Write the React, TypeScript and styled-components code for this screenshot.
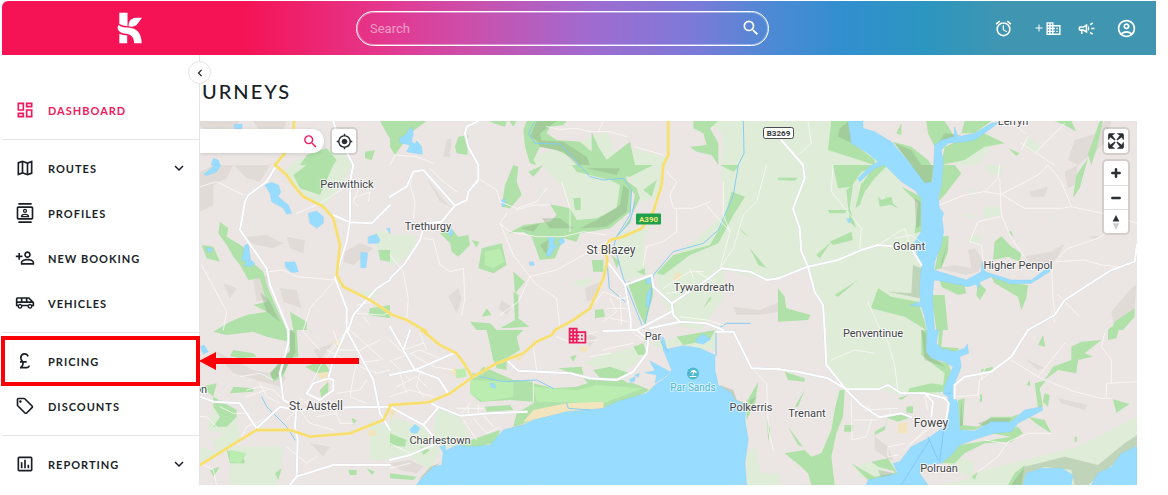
import React from "react";
import styled, { createGlobalStyle } from "styled-components";
import {
  MdAdd,
  MdBusiness,
  MdChevronLeft,
  MdCurrencyPound,
  MdExpandMore,
  MdMyLocation,
  MdOutlineAccountCircle,
  MdOutlineAirportShuttle,
  MdOutlineAlarm,
  MdOutlineAssessment,
  MdOutlineCampaign,
  MdOutlineContacts,
  MdOutlineDashboard,
  MdOutlineLocalOffer,
  MdOutlineMap,
  MdOutlinePersonAddAlt,
  MdSearch,
} from "react-icons/md";

const GlobalStyle = createGlobalStyle`
  *, *::before, *::after { box-sizing: border-box; }
  body { margin: 0; background: #fff; color: #1a1f27; font-family: Lato, sans-serif; }
  button, input { font: inherit; color: inherit; }
`;

const Page = styled.div`
  height: 100vh;
  display: flex;
  flex-direction: column;
  padding: 1px 12px 10px 2px;
  overflow: hidden;
`;

const Header = styled.header`
  flex: none;
  display: grid;
  grid-template-columns: 354px minmax(160px, 413px) 1fr;
  align-items: center;
  height: 54px;
  border-top-left-radius: 6px;
  color: #fff;
  background: linear-gradient(
    90deg,
    #f51356 0%,
    #f51356 21%,
    #e23a92 34%,
    #c653b0 42%,
    #a06bd0 51%,
    #7b7ad8 60%,
    #4b8ad4 67%,
    #318fce 73%,
    #2c96c0 80%,
    #4096b1 87%,
    #4096b1 100%
  );
`;

const LogoLink = styled.a`
  display: flex;
  padding-left: 115px;
  color: #fff;
`;

const SearchBar = styled.form`
  display: flex;
  align-items: center;
  height: 35px;
  padding: 0 7px 0 13px;
  border: 1px solid #fff;
  border-radius: 18px;
  box-shadow: inset 0 0 0 1px rgba(255, 255, 255, 0.4);
`;

const SearchInput = styled.input`
  flex: 1;
  min-width: 0;
  padding: 0;
  border: 0;
  outline: 0;
  background: transparent;
  font-family: Roboto, sans-serif;
  font-size: 13px;
  &::placeholder {
    color: rgba(255, 255, 255, 0.5);
    opacity: 1;
  }
`;

const PlainButton = styled.button`
  display: inline-flex;
  align-items: center;
  justify-content: center;
  padding: 0;
  border: 0;
  background: transparent;
  cursor: pointer;
`;

const Actions = styled.div`
  display: flex;
  align-items: center;
  justify-content: flex-end;
  gap: 16px;
  padding-right: 19px;
`;

const ActionGroup = styled.div`
  display: flex;
  align-items: center;
  gap: 15px;
  margin: 0 4px;
`;

const Body = styled.div`
  flex: 1;
  min-height: 0;
  display: flex;
`;

const Sidebar = styled.aside`
  position: relative;
  z-index: 2;
  flex: none;
  width: 198px;
  padding-top: 27px;
  border-right: 1px solid #e4e4e6;
  background: #fff;
`;

const Collapse = styled(PlainButton)`
  position: absolute;
  top: 6px;
  right: -12px;
  width: 23px;
  height: 23px;
  border: 1px solid #e4e4e6;
  border-radius: 50%;
  background: #fff;
`;

const NavGroup = styled.ul`
  list-style: none;
  margin: 0;
  padding: 6px 0;
  & + & {
    border-top: 1px solid #e6e6e8;
  }
`;

const NavItem = styled.li`
  position: relative;
`;

const NavLink = styled.a<{ $active?: boolean }>`
  display: flex;
  align-items: center;
  gap: 13px;
  height: 45px;
  padding: 0 11px 1px 13px;
  color: ${(p) => (p.$active ? "#f0195c" : "#1a1f27")};
  font-size: 11px;
  font-weight: 700;
  letter-spacing: 1px;
  text-decoration: none;
`;

const NavLabel = styled.span`
  flex: 1;
`;

const Callout = styled.div`
  position: absolute;
  inset: -3px -1px -2px -1px;
  border: 4px solid #fb0007;
  pointer-events: none;
`;

const CalloutArrow = styled.svg`
  position: absolute;
  left: 100%;
  top: 13px;
  pointer-events: none;
`;

const Main = styled.main`
  flex: 1;
  min-width: 0;
  display: flex;
  flex-direction: column;
  padding-right: 19px;
`;

const Title = styled.h1`
  flex: none;
  display: flex;
  align-items: center;
  height: 66px;
  margin: 0;
  padding: 6px 0 0 2px;
  font-size: 20px;
  font-weight: 500;
  letter-spacing: 2px;
`;

const MapPanel = styled.section`
  position: relative;
  flex: 1;
  min-height: 0;
  overflow: hidden;
  background: #ebe6e3;
`;

const MapSvg = styled.svg`
  display: block;
  width: 100%;
  height: 100%;
`;

const MapTools = styled.div`
  position: absolute;
  top: 8px;
  left: 0;
  display: flex;
  gap: 8px;
`;

const MapSearch = styled.form`
  display: flex;
  align-items: center;
  width: 124px;
  height: 24px;
  padding-right: 5px;
  border-radius: 0 12px 12px 0;
  background: #fff;
  color: #f0195c;
  box-shadow: 0 1px 4px rgba(0, 0, 0, 0.12);
`;

const MapControls = styled.div`
  position: absolute;
  top: 8px;
  right: 9px;
  display: flex;
  flex-direction: column;
  gap: 8px;
`;

const ControlGroup = styled.div`
  display: flex;
  flex-direction: column;
  border-radius: 3px;
  background: #fff;
  box-shadow: 0 0 0 2px rgba(0, 0, 0, 0.1);
`;

const ControlButton = styled(PlainButton)`
  width: 24px;
  height: 24px;
  color: #2b2f33;
  & + & {
    border-top: 1px solid #ddd;
  }
`;

/* Map geometry: every shape belongs to a sheet of the survey grid. */
type Shape = [sheet: keyof typeof sheets, d: string];

const sheets = {
  A1: [0, 0],
  B1: [1170, 0],
  C1: [2334, 0],
  A2: [0, 495],
  B2: [1170, 495],
  C2: [2334, 495],
  A3: [0, 990],
  B3: [1170, 990],
  C3: [2334, 990],
};

const shade: Shape[] = [
  ["A1", "M600,363L720,363 700,390 640,395 600,380Z M760,363L860,363 850,390 780,395Z"],
  ["A2", "M600,20L640,0 700,0 680,40 640,60 640,120 600,140Z M740,215L800,210 850,235 820,250 750,235Z M860,215L915,225 910,265 870,250Z M760,345L800,330 810,400 770,410Z M840,370L890,375 905,430 850,410Z M670,355L710,370 690,400Z M1035,260L1080,235 1120,250 1060,300 1030,290Z M700,0L810,0 780,50 740,40Z M1080,50L1120,45 1110,70Z"],
  ["B1", "M170,420L185,415 180,470 160,470Z"],
  ["B2", "M110,40L165,110 190,130 150,110Z M175,395L205,370 215,400 200,445Z M335,405L365,425 350,450 325,430Z M585,370L630,350 620,400 590,410Z M1030,425L1110,435 1170,410 1170,440 1100,450 1040,450Z"],
  ["C1", "M890,420L960,400 980,363 1000,363 980,430 900,495 870,480Z"],
  ["C2", "M860,20L900,0 890,60 870,70Z M755,80L810,65 800,95 760,95Z M570,255L590,250 620,290 600,320 565,330 480,310 530,300 580,310Z M735,275L820,260 860,235 840,275 820,300 750,300Z M1000,440L1060,370 1075,360 1070,430 1010,495Z M930,215L965,212 950,222Z"],
  ["A3", "M640,60L760,120 860,140 840,170 700,130Z M940,60L1000,40 960,90Z M930,340L990,350 970,380Z"],
  ["B3", "M0,400L60,390 100,410 80,430 30,420Z M560,0L620,20 600,50Z"],
  ["C3", "M290,320L330,350 350,395 320,380 290,360Z M840,205L930,225 920,240 850,220Z M740,85L800,115 780,120Z"],
];

const pale: Shape[] = [
  ["C2", "M-219,-132L-164,-95 -170,0 -165,150 -260,235 -370,320 -340,420 -300,480 -230,495 -165,400 -160,315 -40,345 0,340 90,305 110,380 135,420 140,600 205,672 310,672 360,690 490,690 520,620 450,560 430,480 430,150 400,100 330,0 240,-100 215,-132Z"],
  ["C1", "M520,470L620,410 640,440 600,495 540,495Z M750,410L790,440 770,460 740,440Z"],
  ["C2", "M618,125L665,125 670,150 618,160Z M575,210L612,212 605,235 572,230Z M620,0L670,0 670,30 630,25Z M567,70L590,75 585,90Z M555,150L580,150 590,165Z M830,150L837,150 837,160 828,160Z"],
  ["C3", "M480,465L560,450 620,420 740,390 900,350 1077,260 1077,465Z M540,380L590,400 580,440 500,410Z M250,400L330,400 310,440 240,440Z"],
  ["B2", "M455,0L520,70 540,130 540,195 620,170 700,150 720,60 650,-100 540,-60Z M690,205L780,180 760,240 770,330 700,345 680,240Z M730,-50L830,-20 800,100 750,110 720,40Z M0,210L75,210 75,260 0,305Z M560,345L610,340 590,365 550,360Z M450,65L462,90 445,80Z"],
  ["B1", "M430,470L540,430 620,495 430,495Z"],
  ["A1", "M930,470L1010,440 1070,495 900,495Z"],
  ["A2", "M900,-20L1060,-10 1020,70 970,125 910,95 850,20Z M1130,200L1170,200 1170,300 1130,250Z M1080,380L1140,380 1110,405Z"],
  ["A3", "M690,350L850,350 830,465 690,465Z M640,230L710,260 720,320 620,300Z M600,350L660,370 600,400Z M1110,270L1170,290 1170,390 1110,390Z M640,330L700,300 720,325 650,370Z"],
  ["B3", "M580,100L620,80 740,50 760,80 700,130 640,120Z M0,260L100,290 150,360 120,420 60,380 0,380Z M140,235L210,260 240,320 160,360 130,310Z M780,40L975,0 975,60 860,45 820,60Z M1070,370L1100,350 1110,430 1170,430 1170,465 1070,465Z"],
];

const green: Shape[] = [
  ["A1", "M1140,363L1180,363 1180,430 1160,400Z M1095,455L1125,450 1115,480 1095,475Z M920,465L980,445 1010,480 1000,495 900,495Z"],
  ["B1", "M0,363L110,363 60,400 40,430 15,465 0,440Z M195,440L205,410 235,405 232,465 200,460Z M300,363L350,363 345,380 310,370Z M358,363L380,363 370,380Z M410,363L530,363 520,375 480,380 470,400 500,420 570,425 605,455 605,395 625,440 650,480 700,440 720,425 735,495 570,495 540,470 500,450 450,440 430,480 440,495 420,490 405,440 400,390Z M910,363L985,363 960,385 985,430 985,495 965,465 920,455 900,440 950,435 940,400 910,385Z"],
  ["C1", "M160,363L210,363 225,430 290,480 290,495 150,450Z M445,363L500,363 530,410 470,440 450,400Z M560,363L640,363 590,400 550,400Z M500,440L610,395 680,430 620,440 560,480 490,495Z M345,425L400,440 450,480 460,495 400,495Z M355,400L370,370 370,405Z M690,445L725,460 715,468Z M830,363L880,363 895,395 860,375Z M930,463L965,363 975,363 955,450 940,495Z M200,445L290,475 220,470Z"],
  ["A2", "M655,205L660,170 685,190 680,215 730,245 755,290 790,320 800,360 830,430 860,495 865,530 800,515 760,500 680,510 640,500 690,470 740,450 800,440 760,420 800,410 780,340 745,345 720,300 700,275 680,240Z M605,240L640,245 660,290 620,280Z M880,30L920,0 1000,0 960,90 900,70Z M870,440L920,470 920,495 880,495Z M1110,430L1170,420 1170,460 1105,450Z M1135,255L1170,255 1170,290 1140,285Z"],
  ["B2", "M370,0L385,5 380,50 395,90 360,130 335,125 345,60Z M415,20L460,0 430,35Z M150,205L180,185 205,215 235,210 240,240 205,275 185,260 180,235Z M245,225L268,230 260,248Z M275,250L335,235 350,300 310,325 265,310Z M355,205L400,180 480,170 500,150 480,118 540,130 560,165 620,160 680,130 690,60 660,45 560,20 545,0 690,0 725,75 720,140 660,190 570,205 560,230 520,220 495,280 450,285 425,215 400,200Z M550,100L572,98 572,135 555,135Z M370,320L405,350 375,385Z M370,380L385,390 385,460 418,485 330,490 375,465Z M275,455L290,430 305,450Z M240,470L300,475 320,495 260,495Z M605,285L640,285 640,320 610,320Z M615,435L640,432 645,455 615,460Z M665,270L690,290 680,310Z M712,350L785,335 790,390 775,440 765,480 745,440Z M700,40L740,70 750,100 720,160 690,205 720,175 735,90Z M800,325L850,270 960,240 1000,170 1025,80 1065,95 1030,150 985,235 900,270 820,330Z M760,75L800,45 785,95Z M990,0L1030,20 1045,5 1040,0Z M1045,185L1075,215 1060,205Z M940,430L960,395 965,400Z M1080,250L1130,310 1105,300Z M740,320L765,310 765,330Z M600,0L790,0 720,35 640,30Z"],
  ["C2", "M165,0L320,0 250,20 220,65 180,70Z M395,0L470,0 460,60 440,55Z M495,0L530,0 550,25 500,90 480,110 490,50Z M205,75L225,60 215,130 235,190 215,170Z M370,65L430,95 430,200 410,205 420,115Z M290,0L330,0 290,40 250,60Z M232,130L250,55 290,40 260,80 245,120Z M155,230L220,200 225,225 165,240Z M115,270L160,230 125,280Z M490,215L512,212 510,260 490,310 470,315Z M0,38L60,38 50,47 0,45Z M895,30L930,-20 905,70 885,98Z M650,230L670,213 700,245 730,265 725,290 690,275 645,285Z M485,345L560,362 565,385 540,390 490,365Z M600,350L625,375 605,405 595,390Z M640,335L700,355 750,360 745,400 730,435 720,395 650,355Z M690,200L700,198 705,215Z M280,425L300,370 340,395 420,410 440,470 445,495 380,455 280,430Z M170,390L240,345 180,395Z M460,390L500,390 510,495 475,495Z M0,370L20,395 25,430 98,450 90,465 0,470Z M1010,470L1070,430 1070,455 1035,495 1000,495Z M150,135L210,135 200,145 155,145Z M300,95L310,105 340,95 345,118 305,125Z M320,90L360,130 340,120Z"],
  ["A3", "M700,60L760,70 770,80 720,85 690,78Z M860,0L890,0 895,80 870,85 850,140 820,155 810,130 850,90 870,60Z M915,110L970,90 990,125 950,130Z M960,180L985,155 985,195 965,210Z M700,170L760,175 760,185 690,190Z M640,200L710,240 710,260 680,290 640,290 660,260 640,230Z M605,170L650,160 640,200Z M680,360L730,380 735,400 690,400Z M630,420L660,410 640,440Z M825,430L845,415 835,450Z M1045,420L1070,420 1070,435 1050,435Z M1055,265L1070,270 1060,285Z M1100,415L1125,425 1115,435Z"],
  ["B3", "M290,0L400,0 380,20 390,60 350,85 350,120 320,115 310,90Z M250,145L280,110 370,150 430,155 430,215 360,210 270,215 240,190Z M240,130L290,130 320,170 260,180Z M285,230L360,225 370,240 290,245Z M430,160L490,175 560,170 620,150 730,160 780,180 740,200 640,235 430,225Z M380,250L430,220 520,230 430,270 390,285 370,290Z M610,120L660,110 720,130 700,145 630,145Z M505,115L575,110 580,135 545,130Z M580,145L700,150 720,165 600,165Z M860,20L975,0 960,30 880,45Z M1070,215L1105,155 1095,220 1070,270Z M1130,265L1140,300 1135,335Z M0,310L50,330 45,350 0,345Z M0,430L80,440 70,450 0,445Z M90,350L120,360 100,375Z M200,345L330,300 320,335 270,350 230,355Z M730,50L760,40 770,75 745,75Z M540,80L560,75 550,95Z M205,125L225,120 210,145Z"],
  ["C3", "M430,0L447,0 447,65 470,90 510,100 520,125 495,185 430,190 390,185 395,175 460,160 495,165 500,130 430,75Z M482,0L495,0 490,50 545,55 530,68 480,62Z M20,125L80,145 80,155 30,150Z M185,180L200,180 195,260 175,310 160,380 170,465 100,465 90,430 70,410 20,370 80,360 100,380 130,370 160,300 170,240Z M200,285L225,285 222,305 198,305Z M50,230L80,180 60,230Z M30,290L75,350 60,345Z M360,205L390,195 370,210Z M385,230L405,228 405,250 385,248Z M320,260L380,250 390,265 360,275Z M290,305L325,285 330,260 320,300 290,315Z M220,400L290,440 350,430 345,415 360,430 340,450 270,450Z M280,395L330,385 355,425 300,410Z M540,210L560,205 555,285 600,290 640,260 700,260 780,235 770,160 805,150 785,175 795,230 720,255 700,285 620,285 590,300 545,300Z M800,150L825,110 880,90 880,50 910,35 970,30 920,70 945,80 900,90 895,130 840,120Z M780,45L795,15 802,50Z M745,165L755,150 757,168Z M1005,208L1055,222 1015,248Z M605,195L612,193 612,215 605,215Z M610,118L645,110 645,123 610,125Z M490,400L545,345 700,320 640,310 720,290 735,310 700,335 620,340 560,370 530,400Z M750,260L800,270 820,310 780,285Z M580,440L600,425 590,450Z M690,465L710,430 740,405 730,465Z M890,320L897,320 897,335 890,335Z M990,0L1000,-10 1025,-10 1015,25 990,30Z M800,190L815,195 810,230 795,215Z"],
];

const dark: Shape[] = [
  ["B1", "M440,420L520,425 590,470 600,495 560,495 520,455 450,440Z M440,363L500,363 450,400 455,430 420,410Z"],
  ["B2", "M620,165L690,120 700,60 718,75 710,140 650,185 570,190Z M390,190L450,175 430,200Z M450,240L475,225 470,270Z M590,10L690,10 680,30Z M455,160L510,160 550,190 480,190Z"],
  ["C1", "M185,385L215,363 225,430 180,410Z M500,400L550,405 480,430Z M350,430L400,450 430,495 400,495Z"],
  ["C2", "M400,0L465,0 460,60 430,50Z M410,100L428,110 428,180 415,190Z M405,300L430,310 425,400 330,380 400,385Z M490,290L510,230 490,310Z"],
  ["C3", "M430,0L445,10 445,60 500,110 440,90Z M550,210L555,285 545,290Z M600,280L640,265 700,265 690,280 620,290Z M700,465L740,410 860,380 960,405 1040,340 1077,315 1077,345 1020,390 960,440 930,465 890,465 880,420 800,410 745,430 735,465Z M300,420L350,430 310,445Z"],
  ["B3", "M320,330L340,300 410,280 390,290 350,300 310,350 290,350Z M120,410L150,400 100,440 85,450Z M1080,210L1100,200 1080,230Z M990,165L1030,180 1040,210 1070,220 1060,230 1020,200Z"],
  ["A3", "M810,130L860,70 890,60 850,130 820,150Z M870,0L885,10 885,60 870,70Z"],
  ["A2", "M780,380L810,410 840,470 800,440Z"],
];

const lime: Shape[] = [
  ["B3", "M240,150L370,155 370,200 280,215 240,190Z M430,170L560,180 620,165 760,175 640,220 440,215Z M190,120L225,115 230,140 200,145Z"],
  ["B2", "M285,260L330,250 345,290 310,310 285,300Z"],
  ["A3", "M690,360L740,370 720,400 690,395Z"],
];

const sand: Shape[] = [
  ["B3", "M400,275L430,240 530,220 640,215 640,235 530,247 430,272Z M770,185L790,165 790,182Z M0,240L30,230 0,270Z M570,50L595,50 590,65 570,65Z M370,85L395,80 395,95Z M180,125L195,110 200,140Z"],
  ["C3", "M360,280L388,275 388,310 360,310Z"],
  ["A3", "M955,130L985,125 985,155 960,155Z M1105,300L1128,300 1128,318 1105,318Z M1000,35L1030,30 1020,60Z"],
  ["B2", "M855,325L875,325 870,345 850,345Z"],
];

const water: Shape[] = [
  ["C2", "M210,-132L255,-132 255,-110 290,-100 340,-70 400,0 440,55 463,50 467,0 470,-60 490,-75 528,-85 530,-115 540,-85 590,-95 640,-125 662,-128 640,-110 590,-75 560,-70 510,-65 490,-45 495,-15 495,0 490,60 480,100 485,130 497,145 492,160 497,200 490,240 470,290 468,315 500,325 565,345 610,320 612,290 622,320 700,345 760,345 820,300 815,320 760,355 700,357 640,335 607,350 600,372 595,358 570,365 490,348 468,345 463,400 470,495 482,495 475,535 490,550 530,560 560,550 568,537 572,565 545,575 550,605 530,655 525,685 540,715 545,795 590,798 640,770 700,770 740,735 790,725 795,735 720,775 700,800 650,805 600,820 545,840 520,870 490,895 430,900 425,925 450,960 265,960 270,945 360,925 345,895 365,890 400,845 450,820 500,785 515,735 510,695 495,685 500,665 525,605 500,590 460,580 445,560 447,495 440,455 430,425 395,420 427,410 425,380 430,300 415,260 410,230 430,200 430,100 410,75 370,50 320,0 290,10 245,50 240,40 275,5 300,-10 270,-35 220,-65 215,-100Z"],
  ["B3", "M80,465L90,450 130,410 155,405 160,365 200,345 240,350 300,345 340,300 400,285 430,270 530,245 640,235 680,215 770,190 795,165 830,140 845,120 820,60 880,47 930,55 975,75 975,120 985,165 1025,190 1035,210 1070,225 1065,270 1075,330 1065,400 1070,465Z"],
  ["B3", "M820,60L815,20 822,25 832,62Z M780,93L840,125 825,140 795,160 800,135 765,128 795,122Z M720,148L735,140 735,152 722,158Z M735,135L748,130 745,142Z M60,298L75,283 90,295 80,310 65,308Z M300,160L312,160 318,175 305,172Z M920,25L940,12 962,28 940,42 920,38Z M150,350L165,345 168,370 158,365Z"],
  ["C3", "M735,465L745,430 790,415 850,415 885,435 880,465Z M940,465L960,430 1000,410 1030,370 1077,348 1077,465Z"],
  ["A1", "M703,373L727,373 725,388 705,388Z M633,495L640,475 655,480 660,495Z"],
  ["A2", "M612,28L645,0 663,0 650,20 620,32Z M795,60L815,52 835,60 842,80 835,95 865,120 875,145 860,148 850,130 815,110 810,85Z M925,145L950,138 970,155 970,175 950,190 930,175Z M735,240L745,238 752,285 765,295 755,305 733,302 740,290 725,285Z M622,247L635,250 632,262 622,260Z M855,292L885,290 895,320 875,323 858,308Z M1105,215L1130,207 1140,225 1135,235 1105,235Z M1083,262L1103,265 1098,308 1082,308Z M1160,190L1170,190 1170,205Z"],
  ["B1", "M45,405L65,380 70,400 65,425 75,432 80,422 95,440 97,463 75,460 50,455 60,435 28,428 30,415Z"],
  ["B2", "M335,105L345,103 345,120 337,125Z M172,200L182,190 190,200 183,215Z M475,215L495,220 490,240 505,240 490,255 480,275 468,270 478,245Z M505,225L518,218 525,230 512,240Z M418,292L430,290 433,300 420,302Z M770,340L782,340 782,355 770,358Z M772,385L782,370 780,420 768,425Z"],
  ["C2", "M207,160L218,163 217,173 210,172Z"],
  ["A3", "M600,50L612,45 625,65 610,72Z"],
];

const streams: Shape[] = [
  ["B1", "M435,363L415,400 435,430 510,432 560,485 568,500"],
  ["B2", "M568,0L600,35 640,45 700,40 725,75 720,150 680,215 M735,110L720,170 680,215 672,240 700,340 760,490 M652,300L658,370 705,410 M1045,0L1030,90 985,195 940,235 850,260 790,330 782,400 765,480 M985,490L1010,475 1080,475"],
  ["B1", "M1060,363L1062,460 1045,495"],
  ["A3", "M785,200L800,230 860,290 885,330"],
  ["B3", "M270,140L340,155 440,150 490,175 M978,10L978,75 M808,10L815,40 835,65 M530,220L535,235 600,240"],
  ["C3", "M500,190L520,190"],
];

const ferry: Shape[] = [["C3", "M455,330L370,465 M450,320L480,390 M497,300L485,395"]];

const lanes: Shape[] = [
  ["A2", "M600,65L650,50 730,90 M605,300L680,440 670,495 M805,320L850,315 890,335 1005,345 M1005,345L930,430 910,495 M890,145L960,115 1045,60 M1060,100L1110,80 1105,110 M1080,60L1060,110 1075,125 M1070,420L1130,410 M1060,445L1150,450 1170,440 M1090,455L1110,480"],
  ["B1", "M470,380L510,388 560,385 600,395 660,395 710,410 M640,363L625,395 M735,440L820,465 M15,465L80,470 130,490 M0,495L15,465"],
  ["B2", "M265,40L320,75 330,110 380,130 440,110 470,70 M350,145L330,175 360,200 440,215 520,215 580,200 650,210 M380,135L430,120 480,120 M515,50L540,130 540,200 M330,175L370,270 420,335 385,410 330,450 M420,335L500,315 580,270 650,230 M100,220L130,225 150,300 180,320 220,310 225,400 215,450 M0,270L40,320 55,400 50,460 M70,20L60,60 75,110 70,160 M120,10L160,50 200,80 M830,20L860,50 840,90 850,130 910,130 960,110 M945,115L1020,200 990,310 M860,130L860,200 820,230 770,245 760,300 M600,430L640,380 690,400 M1000,50L1000,150 1020,200 M420,335L440,360 500,400 510,490 M990,310L1030,250 1060,150 1100,110 1130,0"],
  ["B2", "M660,400L680,440 640,470 M680,400L710,400 M650,430L710,430 M660,460L715,470 M690,390L695,480 M820,370L850,350 900,320 940,320 M830,385L870,380 M900,310L910,340 M920,320L970,350 M870,455L950,465 1000,480"],
  ["C1", "M90,363L100,430 60,465 M750,410L730,450 M730,430L830,495 M740,400L720,380 M770,460L860,370"],
  ["C2", "M165,0L160,80 200,130 250,190 245,255 M485,120L560,90 620,80 660,40 665,0 M620,80L670,88 780,30 810,0 850,50 880,125 1020,155 1077,175 M670,88L740,130 850,130 880,125 M665,40L670,150 700,220 750,290 M665,155L600,170 575,230 610,240 615,290 M820,300L870,250 960,220 990,200 M820,300L825,400 830,450 M835,290L920,285 970,300 1020,305 M830,470L820,440 M840,390L900,450 M300,240L380,190 400,250 M270,410L300,480 330,530 350,600 360,680 M440,240L400,210 350,220"],
  ["C3", "M700,90L780,140 800,150 890,185 970,205 1000,205 M985,200L985,160 1077,155 M860,40L780,140 M600,190L605,205 M610,150L620,115 M540,200L600,195 605,150 690,90 M1000,160L1000,90 970,50 980,10 M660,380L690,335 750,310 820,310 M600,425L660,380 M220,205L222,330 265,320 280,270 M230,270L300,270 M260,240L360,235 M270,225L280,245 M620,330L680,340 M160,90L230,60 290,70 M380,360L400,340 460,290 M400,340L440,300 470,270 M380,340L330,350 330,380 360,375 M440,200L450,240 M330,260L340,240"],
  ["A3", "M660,230L700,250 750,250 M780,160L800,200 840,220 M740,180L780,170 820,180 850,210 M900,240L930,280 1000,300 M930,170L960,110 1040,0 M1000,0L1020,60 1080,60 1140,30 M980,60L1060,100 1140,90 M1080,110L1130,130 1170,120 M1060,140L1050,200 1100,220 M1010,190L1080,180 1100,150 M1000,220L1020,280 1060,280 M950,260L1010,250 M1080,60L1060,140 M650,290L620,260 600,260 M720,330L740,290 790,270 M890,240L860,270 M820,150L780,130 720,140 M905,0L960,60 M1050,0L1150,90 M600,400L640,420 650,465 M860,350L920,400 950,380 M740,200L800,180 M900,205L930,225"],
  ["B3", "M0,30L60,90 M10,90L90,60 160,90 M60,70L130,110 190,120 M90,10L110,60 M40,60L100,40 M0,90L60,150 M20,170L80,140 110,170 M0,200L60,180 130,200 M90,125L80,170 100,200 M30,130L50,190 M200,235L280,235 M215,250L240,220 M235,230L235,255 M265,225L265,255 M250,265L290,310 330,290 M280,255L310,290 M220,270L260,330 M430,155L430,215 M500,20L550,40 620,30 M570,20L620,5 M720,0L760,30 M1085,115L1130,160 1135,300 1150,360 M0,340L60,370 M0,415L60,400 M430,50L440,120 M640,60L680,50 730,40 M600,80L660,70"],
];

const whiteRoads: Shape[] = [
  ["A2", "M830,0L800,50 745,90 735,110 720,195 800,310 810,360 865,495 M1000,150L1050,172 1115,175 1170,120 M1060,0L1050,50 1050,170 1040,230 1005,340 1040,430 1040,500 M1045,495L1060,450 1130,370 1170,345"],
  ["A1", "M1000,363L1010,400 1060,495"],
  ["A3", "M865,0L865,40 840,130 850,210 890,230 885,290 893,330 890,440 870,465 M600,200L640,215 720,220 770,295 840,230 890,240 1050,232 1170,230 M890,440L1000,405 1170,405 M1040,0L1000,90 985,145 940,160 920,190 960,210 1000,180 1000,150 985,145 M1040,0L1120,150 1140,250 1170,300"],
  ["B1", "M265,363L230,380 225,400 235,440 265,495"],
  ["B2", "M0,95L50,65 70,20 100,15 195,122 155,170 105,175 90,225 45,295 0,340 M195,122L230,105 235,80 265,45 265,0 M652,290L705,360 722,460 722,495 M705,360L785,330 790,365 845,415 850,450 870,470 780,490 M740,495L845,440 M845,415L950,345 995,310 1080,320 1130,345 1170,340 M870,470L950,475 1000,495"],
  ["C1", "M10,420L75,495"],
  ["C2", "M75,0L80,40 45,130 65,190 70,260 90,305 110,380 135,420 140,495 M0,340L90,305 180,285 250,255 300,240 400,250 430,300 M750,495L830,450 860,405 1000,315 1070,290 1077,240"],
  ["C3", "M140,0L145,105 205,180 250,225 305,262 370,250 400,262 M0,118L60,125 150,145 205,178 300,178 330,165 370,190 440,190 500,205 M440,190L465,215 460,260 M530,205L530,165 560,140 640,125 700,80 750,0 M500,205L512,220 505,265 490,290"],
  ["B3", "M355,95L385,122 540,130 600,145 680,150 730,125 770,70 775,30 740,0 M640,3L740,0 M980,5L1030,5 1085,115 1170,118 M0,-10L40,60 75,120 0,135 M40,60L60,0 M75,120L190,70 M75,120L145,145 175,190 M125,220L145,232 100,285 130,320 M150,232L210,257 300,250 410,245 M0,230L100,285 M0,390L60,375 140,340"],
];

const yellowRoads: Shape[] = [
  ["A1", "M882,363L880,395 870,440 825,495"],
  ["A2", "M825,0L860,30 880,60 910,95 970,125 1000,160 1020,240 1010,330 1030,365 1110,405 1170,445"],
  ["B2", "M0,447L50,465 110,500"],
  ["B3", "M95,0L150,45 200,70 225,105 247,142"],
  ["B1", "M835,363L835,465 820,495"],
  ["B2", "M820,0L815,60 790,140 755,190 700,215 660,225 645,250 652,290 640,340 600,430 550,465 495,495"],
  ["B3", "M495,0L485,15 440,35 400,70 320,100 247,142 180,190 115,217 0,225"],
  ["A3", "M1170,230L1150,270 1100,290 1050,310 930,320 870,300 770,300 720,330 640,380 600,405"],
];

const MapLayer = ({ shapes, ...paint }: { shapes: Shape[] } & React.SVGProps<SVGGElement>) => (
  <g fill="none" strokeLinejoin="round" strokeLinecap="round" {...paint}>
    {shapes.map(([sheet, d], i) => (
      <path key={i} d={d} transform={`translate(${sheets[sheet].join(" ")})`} />
    ))}
  </g>
);

const towns: { name: string; x: number; y: number; size?: number }[] = [
  { name: "Penwithick", x: 347, y: 188 },
  { name: "Trethurgy", x: 428, y: 230 },
  { name: "St Blazey", x: 611, y: 254, size: 12 },
  { name: "Tywardreath", x: 704, y: 291 },
  { name: "Golant", x: 909, y: 250 },
  { name: "Higher Penpol", x: 1018, y: 269 },
  { name: "Penventinue", x: 873, y: 337 },
  { name: "Par", x: 653, y: 340 },
  { name: "St. Austell", x: 316, y: 410, size: 12 },
  { name: "Charlestown", x: 440, y: 444 },
  { name: "Polkerris", x: 751, y: 411 },
  { name: "Trenant", x: 807, y: 417 },
  { name: "Fowey", x: 931, y: 427, size: 12 },
  { name: "Polruan", x: 939, y: 472 },
  { name: "Lerryn", x: 1013, y: 125 },
  { name: "on", x: 201, y: 393 },
];

const TownLabel = styled.text<{ $size: number }>`
  font-family: Roboto, sans-serif;
  font-size: ${(p) => p.$size}px;
  fill: #444448;
  stroke: rgba(255, 255, 255, 0.75);
  stroke-width: 2px;
  stroke-linejoin: round;
  paint-order: stroke;
  text-anchor: middle;
`;

const BeachLabel = styled(TownLabel)`
  fill: #4cb6cc;
  stroke: rgba(255, 255, 255, 0.6);
`;

const ShieldText = styled.text<{ $color: string }>`
  font-family: Roboto, sans-serif;
  font-size: 8px;
  font-weight: 700;
  fill: ${(p) => p.$color};
  text-anchor: middle;
`;

const JourneyMap = () => (
  <MapSvg viewBox="200 121 937 364" preserveAspectRatio="xMinYMin slice" role="img" aria-label="Map">
    <g transform="scale(0.333333)">
      <MapLayer shapes={shade} fill="#e0dbd7" />
      <MapLayer shapes={pale} fill="#deecd8" />
      <MapLayer shapes={green} fill="#afe1a8" />
      <MapLayer shapes={dark} fill="#8fae85" fillOpacity={0.38} />
      <MapLayer shapes={lime} fill="#bbecb0" />
      <MapLayer shapes={sand} fill="#f2e5bd" />
      <MapLayer shapes={water} fill="#98dcff" stroke="#8acdf3" strokeWidth={1} />
      <MapLayer shapes={streams} stroke="#86cdf2" strokeWidth={3} />
      <MapLayer shapes={ferry} stroke="#7dbcf0" strokeWidth={2} />
      <MapLayer shapes={lanes} stroke="#fbf9f7" strokeWidth={3} strokeOpacity={0.8} />
      <MapLayer shapes={whiteRoads} stroke="#d8dce6" strokeWidth={8} />
      <MapLayer shapes={whiteRoads} stroke="#fff" strokeWidth={6} />
      <MapLayer shapes={yellowRoads} stroke="#f2e6b0" strokeWidth={9} />
      <MapLayer shapes={yellowRoads} stroke="#f8df6b" strokeWidth={7} />
    </g>
    {towns.map((t) => (
      <TownLabel key={t.name} x={t.x} y={t.y} $size={t.size ?? 11}>
        {t.name}
      </TownLabel>
    ))}
    <circle cx="693" cy="373.500" r="6" fill="#4fb9cc" />
    <path d="M690 372.500q1.500-3 4-2.500t3 3l-3-.800-.800 3h-.900l.700-3.200z M689.800 376h6.500v1h-6.500z" fill="#fff" />
    <BeachLabel x="693" y="391" $size={10}>
      Par Sands
    </BeachLabel>
    <rect x="763.500" y="127.500" width="30" height="11" rx="2" fill="#fff" stroke="#4a4a50" />
    <ShieldText x="778.500" y="136" $color="#333">
      B3269
    </ShieldText>
    <rect x="636" y="213.500" width="25" height="11" rx="1" fill="#1fa04b" />
    <ShieldText x="648.500" y="222" $color="#f4e67a">
      A390
    </ShieldText>
    <MdBusiness x="567" y="325" size={21} color="#f0195c" />
  </MapSvg>
);

const Logo = () => (
  <svg width="25" height="32" viewBox="351 37 76 95" fill="currentColor" aria-hidden="true">
    <path d="M358 38H383V79Q369 78 358 72Z" />
    <path d="M386 79C386 61 395 53 412 53H427L410 76Q399 83 386 79Z" />
    <path d="M356 75Q366 83 384 83C413 84 426 103 426 131H403C403 111 392 104 378 102C358 100 347 87 356 75Z" />
    <path d="M358 102Q369 107 382 107V131H358Z" />
  </svg>
);

type Item = { label: string; icon: React.ReactNode; active?: boolean; expandable?: boolean; marked?: boolean };

const groups: Item[][] = [
  [{ label: "DASHBOARD", icon: <MdOutlineDashboard size={20} />, active: true }],
  [
    { label: "ROUTES", icon: <MdOutlineMap size={20} />, expandable: true },
    { label: "PROFILES", icon: <MdOutlineContacts size={20} /> },
    { label: "NEW BOOKING", icon: <MdOutlinePersonAddAlt size={20} style={{ transform: "scaleX(-1)" }} /> },
    { label: "VEHICLES", icon: <MdOutlineAirportShuttle size={20} /> },
  ],
  [
    { label: "PRICING", icon: <MdCurrencyPound size={20} />, marked: true },
    { label: "DISCOUNTS", icon: <MdOutlineLocalOffer size={20} /> },
  ],
  [{ label: "REPORTING", icon: <MdOutlineAssessment size={20} />, expandable: true }],
];

const IconSlot = styled.span`
  display: flex;
  justify-content: center;
  width: 20px;
`;

export default function App() {
  return (
    <Page>
      <GlobalStyle />
      <Header>
        <LogoLink href="#" aria-label="Home">
          <Logo />
        </LogoLink>
        <SearchBar role="search">
          <SearchInput type="text" placeholder="Search" aria-label="Search" />
          <PlainButton type="button" aria-label="Submit search">
            <MdSearch size={20} />
          </PlainButton>
        </SearchBar>
        <Actions>
          <PlainButton type="button" aria-label="Reminders">
            <MdOutlineAlarm size={19} />
          </PlainButton>
          <ActionGroup>
            <PlainButton type="button" aria-label="Add company">
              <MdAdd size={12} />
              <MdBusiness size={17} />
            </PlainButton>
            <PlainButton type="button" aria-label="Announcements">
              <MdOutlineCampaign size={19} />
            </PlainButton>
          </ActionGroup>
          <PlainButton type="button" aria-label="Account">
            <MdOutlineAccountCircle size={21} />
          </PlainButton>
        </Actions>
      </Header>
      <Body>
        <Sidebar>
          <nav>
            {groups.map((items, i) => (
              <NavGroup key={i}>
                {items.map((item) => (
                  <NavItem key={item.label}>
                    <NavLink href="#" $active={item.active}>
                      <IconSlot>{item.icon}</IconSlot>
                      <NavLabel>{item.label}</NavLabel>
                      {item.expandable && <MdExpandMore size={18} />}
                    </NavLink>
                    {item.marked && (
                      <>
                        <Callout />
                        <CalloutArrow width="160" height="18" viewBox="0 0 160 18" fill="#fb0007">
                          <path d="M0 9L17 0V6H160V12H17V18Z" />
                        </CalloutArrow>
                      </>
                    )}
                  </NavItem>
                ))}
              </NavGroup>
            ))}
          </nav>
          <Collapse type="button" aria-label="Collapse menu">
            <MdChevronLeft size={14} />
          </Collapse>
        </Sidebar>
        <Main>
          <Title>URNEYS</Title>
          <MapPanel>
            <JourneyMap />
            <MapTools>
              <MapSearch>
                <SearchInput type="text" aria-label="Search the map" />
                <PlainButton type="button" aria-label="Find on map">
                  <MdSearch size={17} />
                </PlainButton>
              </MapSearch>
              <ControlGroup>
                <ControlButton type="button" aria-label="Locate me">
                  <MdMyLocation size={17} />
                </ControlButton>
              </ControlGroup>
            </MapTools>
            <MapControls>
              <ControlGroup>
                <ControlButton type="button" aria-label="Full screen">
                  <svg width="24" height="24" viewBox="0 0 29 29" fill="currentColor">
                    <path d="M24 16v5.500c0 1.750-.750 2.500-2.500 2.500H16v-1l3-1.500-4-5.500 1-1 5.500 4 1.500-3h1zM6 16l1.500 3 5.500-4 1 1-4 5.500 3 1.500v1H7.500C5.750 24 5 23.250 5 21.500V16h1zm7-11v1l-3 1.500 4 5.500-1 1-5.500-4L6 13H5V7.500C5 5.750 5.750 5 7.500 5H13zm11 2.500c0-1.750-.750-2.500-2.500-2.500H16v1l3 1.500-4 5.500 1 1 5.500-4 1.500 3h1V7.500z" />
                  </svg>
                </ControlButton>
              </ControlGroup>
              <ControlGroup>
                <ControlButton type="button" aria-label="Zoom in">
                  <svg width="24" height="24" viewBox="0 0 29 29" fill="currentColor">
                    <path d="M14.500 8.500c-.750 0-1.500.750-1.500 1.500v3h-3c-.750 0-1.500.750-1.500 1.500S9.250 16 10 16h3v3c0 .750.750 1.500 1.500 1.500S16 19.750 16 19v-3h3c.750 0 1.500-.750 1.500-1.500S19.750 13 19 13h-3v-3c0-.750-.750-1.500-1.500-1.500z" />
                  </svg>
                </ControlButton>
                <ControlButton type="button" aria-label="Zoom out">
                  <svg width="24" height="24" viewBox="0 0 29 29" fill="currentColor">
                    <path d="M10 13c-.750 0-1.500.750-1.500 1.500S9.250 16 10 16h9c.750 0 1.500-.750 1.500-1.500S19.750 13 19 13h-9z" />
                  </svg>
                </ControlButton>
                <ControlButton type="button" aria-label="Reset north">
                  <svg width="24" height="24" viewBox="0 0 29 29" fill="currentColor">
                    <path d="M10.500 14l4-8 4 8h-8z" />
                    <path d="M10.500 16l4 8 4-8h-8z" fill="#ccc" />
                  </svg>
                </ControlButton>
              </ControlGroup>
            </MapControls>
          </MapPanel>
        </Main>
      </Body>
    </Page>
  );
}
